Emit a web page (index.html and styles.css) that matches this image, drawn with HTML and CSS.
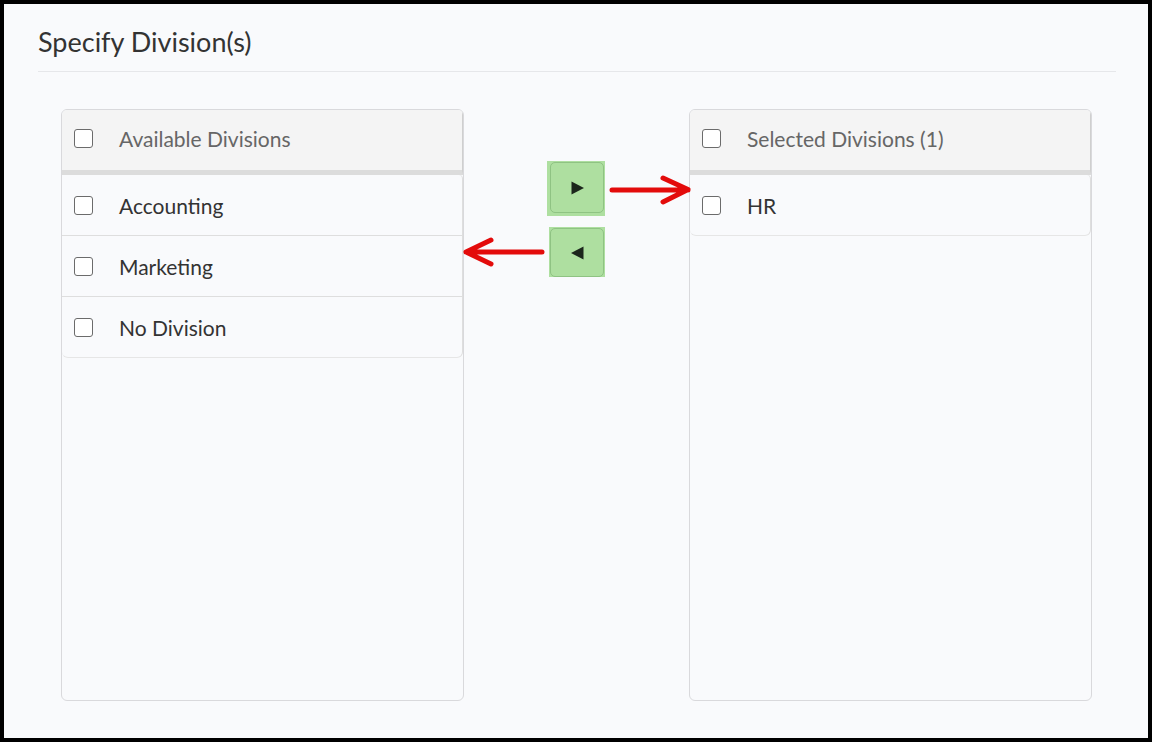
FILE: index.html
```html
<!DOCTYPE html>
<html lang="en">
<head>
<meta charset="utf-8">
<title>Specify Division(s)</title>
<link rel="stylesheet" href="styles.css">
</head>
<body>
<div class="frame">
  <h2 class="title">Specify Division(s)</h2>
  <div class="picker">
    <section class="panel">
      <div class="panel-head">
        <span class="box"></span>
        <span class="head-label">Available Divisions</span>
      </div>
      <ul class="list">
        <li class="row"><span class="box"></span><span class="row-label">Accounting</span></li>
        <li class="row"><span class="box"></span><span class="row-label">Marketing</span></li>
        <li class="row"><span class="box"></span><span class="row-label">No Division</span></li>
      </ul>
    </section>

    <div class="controls">
      <div class="btn-wrap btn-wrap-add">
        <button class="move-btn" type="button" aria-label="Add">
          <svg width="15" height="14" viewBox="0 0 15 14"><path d="M1.5 0.5 L14 7 L1.5 13.5 Z" fill="#1c261c"/></svg>
        </button>
      </div>
      <div class="btn-wrap btn-wrap-remove">
        <button class="move-btn" type="button" aria-label="Remove">
          <svg width="15" height="14" viewBox="0 0 15 14"><path d="M13.5 0.5 L1 7 L13.5 13.5 Z" fill="#1c261c"/></svg>
        </button>
      </div>
      <svg class="arrow arrow-add" width="90" height="36" viewBox="0 0 90 36">
        <path d="M6 18 H82 M57 6 L82 17.5 L57 30" fill="none" stroke="#e30b0b" stroke-width="5" stroke-linecap="round" stroke-linejoin="round"/>
      </svg>
      <svg class="arrow arrow-remove" width="86" height="36" viewBox="0 0 86 36">
        <path d="M80 18 H4 M29 6 L4 18 L29 30" fill="none" stroke="#e30b0b" stroke-width="5" stroke-linecap="round" stroke-linejoin="round"/>
      </svg>
    </div>

    <section class="panel">
      <div class="panel-head">
        <span class="box"></span>
        <span class="head-label">Selected Divisions (1)</span>
      </div>
      <ul class="list">
        <li class="row"><span class="box"></span><span class="row-label">HR</span></li>
      </ul>
    </section>
  </div>
</div>
</body>
</html>
```

FILE: styles.css
```css
* {
  box-sizing: border-box;
}

html, body {
  margin: 0;
  height: 100%;
}

body {
  background: #000;
  padding: 4px;
  font-family: Lato, "Noto Sans", "Liberation Sans", sans-serif;
}

.frame {
  height: 734px;
  background: #f9fafc;
  padding: 21px 32px 0 34px;
}

.title {
  margin: 0;
  font-weight: 400;
  font-size: 27px;
  line-height: 34px;
  color: #333;
  padding-bottom: 12px;
  border-bottom: 1px solid #e6e7ea;
}

.picker {
  display: grid;
  grid-template-columns: 403px 1fr 403px;
  margin: 37px 24px 0 23px;
  height: 592px;
}

.panel {
  border: 1px solid #d9d9dc;
  border-radius: 6px;
  background: #f9fafc;
  overflow: hidden;
}

.panel-head {
  display: flex;
  align-items: center;
  height: 65px;
  padding: 0 0 3px 12px;
  background: #f4f4f4;
  border-bottom: 5px solid #dcdcdc;
  border-right: 1px solid #cfcfcf;
}

.head-label {
  margin-left: 26px;
  font-size: 21px;
  color: #666;
}

.list {
  list-style: none;
  margin: 0;
  padding: 0;
  border-right: 1px solid #dedede;
  border-bottom: 1px solid #e6e6e6;
  border-radius: 0 4px 6px 6px;
  background: #f9fafc;
}

.row {
  display: flex;
  align-items: center;
  height: 61px;
  padding-left: 12px;
  border-top: 1px solid #dedede;
}

.row:first-child {
  height: 60px;
  border-top: none;
}

.row-label {
  margin-left: 26px;
  font-size: 21px;
  color: #333;
}

.box {
  width: 19px;
  height: 19px;
  flex: none;
  border: 1.5px solid #6b6b6b;
  border-radius: 3px;
  background: #fff;
}

.controls {
  position: relative;
}

.btn-wrap {
  width: 58px;
  background: #aedfa0;
  margin-left: 83px;
}

.btn-wrap-add {
  margin-top: 52px;
  height: 55px;
  padding: 1px 1px 3px 3px;
}

.btn-wrap-remove {
  margin-top: 11px;
  margin-left: 85px;
  width: 56px;
  height: 50px;
  padding: 1px 1px 0 1px;
}

.move-btn {
  display: flex;
  align-items: center;
  justify-content: center;
  width: 100%;
  height: 100%;
  padding: 0;
  background: #aedfa0;
  border: 1px solid #8fc383;
  border-radius: 5px;
}

.arrow {
  position: absolute;
}

.arrow-add {
  left: 142px;
  top: 63px;
}

.arrow-remove {
  left: -2px;
  top: 125px;
}
```
